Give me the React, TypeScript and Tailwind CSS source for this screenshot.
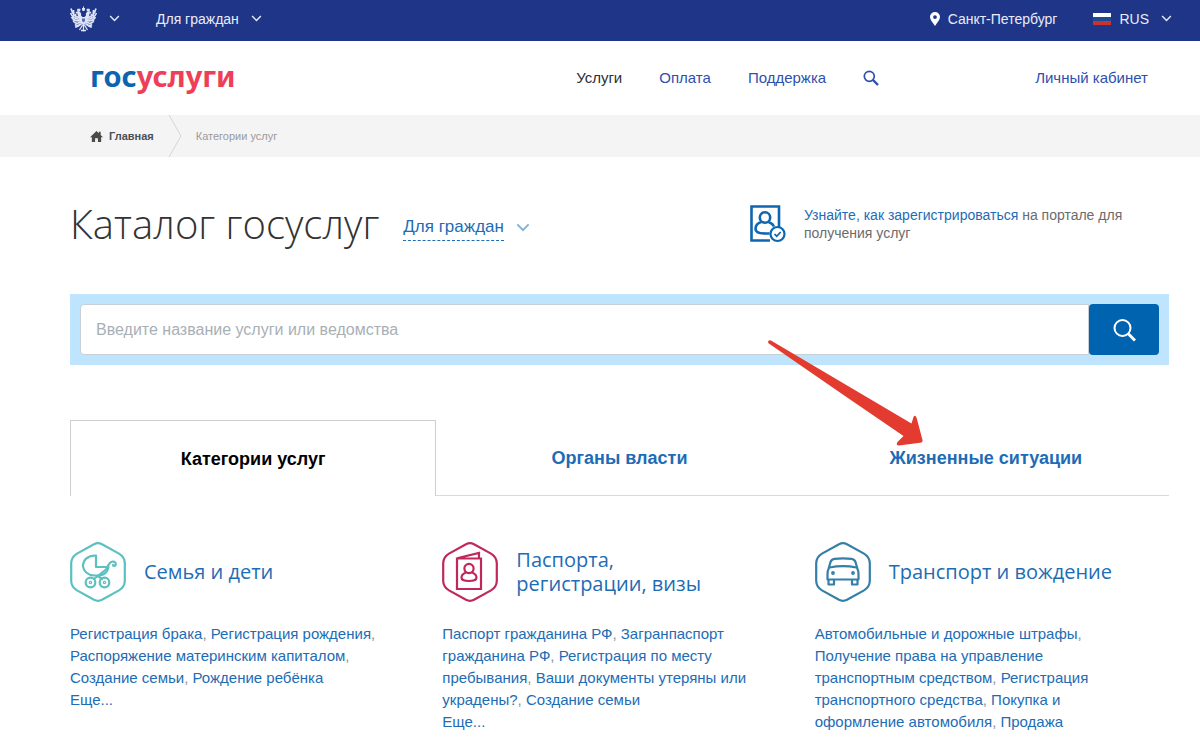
import type { ReactNode } from "react";

const Chevron = ({ className }: { className: string }) => (
  <svg viewBox="0 0 12 8" fill="none" stroke="currentColor" strokeWidth="1.6" className={className}>
    <path d="M1 1.2 6 6.4 11 1.2" />
  </svg>
);

const Eagle = () => (
  <svg viewBox="0 0 54 52" className="h-[26px] w-[27px]" fill="#dfe5f6" stroke="#dfe5f6">
    {/* crowns */}
    <path d="M24 4h2V1h2v3h2v2l-1 4h-4l-1-4zM14 7l2-2 2 1 2-1 1 2-1 4h-5zM40 7l-2-2-2 1-2-1-1 2 1 4h5z" stroke="none" />
    {/* heads and necks */}
    <path d="M11 15c0-3 4-5 7-4 4 1 5 5 4 8l3 3h4l3-3c-1-3 0-7 4-8 3-1 7 1 7 4l-4 0c0 4-1 6-4 9l-4 6H23l-4-6c-3-3-4-5-4-9z" stroke="none" />
    {/* wings */}
    <path
      fill="none"
      strokeWidth="3.2"
      d="M20 23C12 23 5 17 2 5M21 26C12 27 5 23 1 14M21 29C13 31 7 29 3 22M21 32C15 36 9 35 6 29M22 35c-4 4-8 5-12 2M8 21 7 8M12 23l-1-7M34 23c8 0 15-6 18-18M33 26c9 1 16-3 20-12M33 29c8 2 14 0 18-7M33 32c6 4 12 3 15-3M32 35c4 4 8 5 12 2M46 21 47 8M42 23l1-7"
    />
    {/* shield, legs and tail */}
    <path d="M20 22h14v11l-7 6-7-6z" stroke="none" />
    <path d="M24 25h6v5l-3 3-3-3z" fill="#5b70b4" stroke="none" />
    <path fill="none" strokeWidth="2.6" d="m23 36-7 5-6 1M31 36l7 5 6 1M27 37v14M25 38l-6 10M29 38l6 10M22 49h10M13 38v6M41 38v6" />
  </svg>
);

const Hexagon = ({ color, children }: { color: string; children: ReactNode }) => (
  <svg
    viewBox="0 0 56 60"
    fill="none"
    stroke={color}
    strokeWidth="2.2"
    strokeLinecap="round"
    strokeLinejoin="round"
    className="h-[60px] w-14 shrink-0"
  >
    <path d="M24 2.2Q28 .2 32 2.2L49 11.6Q54.6 15 54.8 21V39Q54.6 45 49 48.4L32 57.8Q28 59.8 24 57.8L7 48.4Q1.4 45 1.2 39V21Q1.4 15 7 11.6Z" />
    {children}
  </svg>
);

const Stroller = () => (
  <Hexagon color="#5bc0c0">
    <path d="M26 13.5V25H38.500C37.500 30.500 33.500 33.500 28 33.500H24C17.500 33 13.500 29 13 24.500 12.800 18 18 13.200 26 13.500Z" />
    <path d="M36.500 26C39 24 38.500 20 42.500 19.500c2.200-.2 3.500 1.300 3.300 3-.2 1.600-2.300 1.800-2.800.5" />
    <path d="M36.500 27 24 37M28 34l4 3" />
    <circle cx="20.500" cy="40.500" r="4.800" />
    <circle cx="34.500" cy="40.500" r="4.800" />
    <circle cx="20.500" cy="40.500" r=".6" />
    <circle cx="34.500" cy="40.500" r=".6" />
  </Hexagon>
);

const Passport = () => (
  <Hexagon color="#c0285b">
    <path strokeLinejoin="miter" d="M15 16.500h24v30.500H15zM16 16l21-5V16" />
    <circle cx="27" cy="26.500" r="4.600" />
    <path d="M24 30.500c-3 1.200-4.500 3-4.500 5 0 2.200 3 3.500 7.500 3.500s7.500-1.300 7.500-3.500c0-2-1.500-3.800-4.500-5" />
  </Hexagon>
);

const Car = () => (
  <Hexagon color="#347fa8">
    <path d="M13.500 27 15.500 20c.8-2.200 2-2.900 4-3.100 5-.5 12-.5 17 0 2 .2 3.200.9 4 3.100l2 7c.8 1.500 1 3 1 5v5.500h-31V32c0-2 .2-3.500 1-5Z" />
    <path d="M14.500 25.500c8-1.700 19-1.700 27 0M13.500 38v4.500H19V38M37 38v4.500h5.500V38" />
    <circle cx="18" cy="31" r=".8" />
    <circle cx="38" cy="31" r=".8" />
  </Hexagon>
);

const categories = [
  {
    icon: <Stroller />,
    title: ["Семья и дети"],
    links: ["Регистрация брака", "Регистрация рождения", "Распоряжение материнским капиталом", "Создание семьи", "Рождение ребёнка"],
    more: true,
  },
  {
    icon: <Passport />,
    title: ["Паспорта,", "регистрации, визы"],
    links: ["Паспорт гражданина РФ", "Загранпаспорт гражданина РФ", "Регистрация по месту пребывания", "Ваши документы утеряны или украдены?", "Создание семьи"],
    more: true,
  },
  {
    icon: <Car />,
    title: ["Транспорт и вождение"],
    links: ["Автомобильные и дорожные штрафы", "Получение права на управление транспортным средством", "Регистрация транспортного средства", "Покупка и оформление автомобиля", "Продажа"],
    more: false,
  },
];

const App = () => {
  return (
    <div className="min-h-screen bg-white font-['Liberation_Sans',Arial,sans-serif] text-[15px] text-[#1d6cb5]">
      {/* TOP BAR */}
      <div className="flex h-[41px] items-center bg-[#1f3688] pr-7 pl-[70px] text-sm text-[#e8ecf8]">
        <button className="flex items-center gap-3 pb-1" aria-label="Портал">
          <Eagle />
          <Chevron className="h-[7px] w-[11px]" />
        </button>
        <button className="ml-9 flex items-center gap-3 pb-1">
          Для граждан
          <Chevron className="h-[7px] w-[11px]" />
        </button>
        <button className="ml-auto flex items-center gap-2 pb-1">
          <svg viewBox="0 0 10 14" className="h-[14px] w-[10px]" fill="#fff">
            <path fillRule="evenodd" d="M5 0a5 5 0 0 1 5 5c0 3-3.200 6-5 9C3.200 11 0 8 0 5a5 5 0 0 1 5-5Zm0 3.200a1.900 1.900 0 1 0 0 3.800 1.900 1.900 0 0 0 0-3.800Z" />
          </svg>
          Санкт-Петербург
        </button>
        <button className="ml-9 flex items-center pb-1">
          <svg viewBox="0 0 18 12" className="mr-2 h-3 w-[18px]">
            <path fill="#fff" d="M0 0h18v4H0z" />
            <path fill="#1c4a94" d="M0 4h18v4H0z" />
            <path fill="#c8322f" d="M0 8h18v4H0z" />
          </svg>
          RUS
          <Chevron className="ml-3 h-[7px] w-[11px]" />
        </button>
      </div>

      {/* HEADER */}
      <header className="flex h-[74px] items-center pr-[52px] pl-[90px] text-[#2f4fae]">
        <a href="#" className="pb-1 font-['Noto_Sans',sans-serif] text-[29px] leading-8 font-bold text-[#0b65ae]">
          гос<span className="text-[#ee3f58]">услуги</span>
        </a>
        <nav className="ml-auto flex items-center gap-[37px]">
          <a href="#" className="text-[#2b2f38]">Услуги</a>
          <a href="#">Оплата</a>
          <a href="#">Поддержка</a>
          <button aria-label="Поиск">
            <svg viewBox="0 0 16 16" className="size-4" fill="none" stroke="currentColor">
              <circle cx="6.300" cy="6.300" r="5" strokeWidth="1.700" />
              <path d="m10 10 5 5" strokeWidth="2.400" />
            </svg>
          </button>
        </nav>
        <a href="#" className="ml-[156px]">Личный кабинет</a>
      </header>

      {/* BREADCRUMBS */}
      <nav className="flex h-[42px] items-center bg-[#f4f4f4] pl-[90px] text-[11px]">
        <a href="#" className="flex items-center gap-1.5 font-bold text-[#4a5058]">
          <svg viewBox="0 0 14 14" className="h-[13px] w-[13px]" fill="#4a4a4a">
            <path d="M7 1 0 7.800h2V13h3.500V9h3v4H12V7.800h2L11.500 5.400V1.800h-2v1.600z" />
          </svg>
          Главная
        </a>
        <svg viewBox="0 0 14 42" className="mx-[14px] h-[42px] w-[14px]" fill="none" stroke="#d6d6d6">
          <path d="M1 0 13 21 1 42" />
        </svg>
        <span className="text-[#9a9a9a]">Категории услуг</span>
      </nav>

      <main className="pr-[31px] pl-[70px]">
        {/* TITLE */}
        <section className="flex h-[137px] items-center pb-1">
          <h1 className="font-['Open_Sans',sans-serif] text-[40px] leading-[48px] font-light text-[#333]">Каталог госуслуг</h1>
          <button className="ml-6 flex items-center gap-3 pt-2 text-[17px]">
            <span className="border-b border-dashed border-[#1d6cb5]">Для граждан</span>
            <Chevron className="h-[9px] w-[14px] text-[#7fb0d8]" />
          </button>
          <div className="ml-auto flex w-[419px] items-center gap-[18px] text-sm leading-[18px] text-[#6b6b6b]">
            <svg viewBox="0 0 36 38" className="h-[38px] w-9 shrink-0" fill="none" stroke="#0f66b0" strokeWidth="2.600">
              <path d="M20 35.500H1.500v-34H29V22" />
              <circle cx="15" cy="12.500" r="5.200" />
              <path d="M11.500 17C7.500 18 5.500 21 5.500 24c0 3.500 5 4.500 10 4.500h4M18.500 17c3 1 4.500 2.500 5.500 4.500" />
              <circle cx="27.500" cy="29" r="7" fill="#fff" strokeWidth="2.200" />
              <path d="m24.500 29 2.200 2.300 4-4.300" strokeWidth="1.800" />
            </svg>
            <p className="flex-1">
              <a href="#" className="text-[#1d6cb5]">Узнайте, как зарегистрироваться</a> на портале для получения услуг
            </p>
          </div>
        </section>

        {/* SEARCH */}
        <form className="relative flex bg-[#bfe4fd] p-[10px]">
          <input
            aria-label="Поиск услуг"
            placeholder="Введите название услуги или ведомства"
            className="h-[51px] min-w-0 flex-1 rounded-l border border-[#c8d0d6] bg-white px-[15px] text-base placeholder:text-[#a9b0b5]"
          />
          <button type="button" aria-label="Найти" className="flex w-[70px] items-center justify-center rounded bg-[#0063b0]">
            <svg viewBox="0 0 24 24" className="size-6" fill="none" stroke="#fff">
              <circle cx="10.500" cy="10" r="8" strokeWidth="2" />
              <path d="m16.500 16 6.500 6.500" strokeWidth="3" />
            </svg>
          </button>
          {/* pointer to the last tab */}
          <svg viewBox="0 0 160 110" className="pointer-events-none absolute top-11 right-[244px] z-10 h-[110px] w-40" fill="#e33b30">
            <path d="M5.500 2.300 146.500 85.500 148.500 79Q150 76.500 151.500 79.500L157.500 102Q158 104.500 155 104.700L134 107.500Q130.500 107.500 132.500 104L138.500 98 80 58 3.500 5.200Q2 2.500 5.500 2.300Z" />
          </svg>
        </form>

        {/* TABS */}
        <div role="tablist" className="mt-[55px] grid h-[76px] grid-cols-3 text-lg font-bold">
          <button role="tab" aria-selected="true" className="border border-b-0 border-[#cfcfcf] text-black">Категории услуг</button>
          <button role="tab" aria-selected="false" className="border-b border-[#dadada]">Органы власти</button>
          <button role="tab" aria-selected="false" className="border-b border-[#dadada]">Жизненные ситуации</button>
        </div>

        {/* CATEGORIES */}
        <section className="mt-[46px] grid grid-cols-3 gap-[18px]">
          {categories.map((cat) => (
            <article key={cat.title[0]} className="pr-10">
              <a href="#" className="flex items-center gap-[18px] font-['Open_Sans',sans-serif] text-xl leading-6">
                {cat.icon}
                <h2>
                  {cat.title.map((line) => (
                    <span key={line} className="block">{line}</span>
                  ))}
                </h2>
              </a>
              <p className="mt-[21px] leading-[22px] text-[#8a9299]">
                {cat.links.map((link, i) => (
                  <span key={link}>
                    <a href="#" className="text-[#1d6cb5]">{link}</a>
                    {i < cat.links.length - 1 && ", "}
                  </span>
                ))}
              </p>
              {cat.more && <a href="#" className="leading-[22px]">Еще...</a>}
            </article>
          ))}
        </section>
      </main>
    </div>
  );
};

export default App;
